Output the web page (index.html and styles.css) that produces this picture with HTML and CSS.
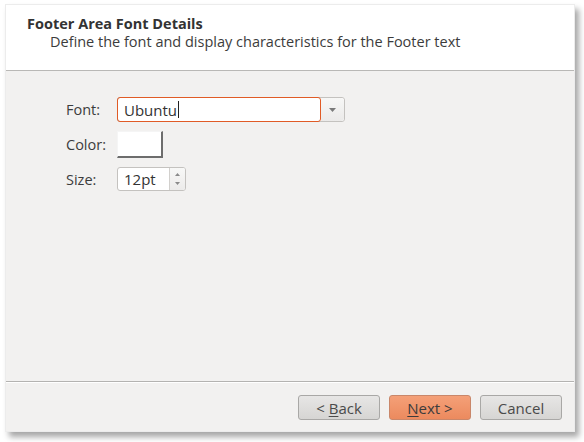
FILE: index.html
```html
<!DOCTYPE html>
<html>
<head>
<meta charset="utf-8">
<link rel="stylesheet" href="styles.css">
</head>
<body>
<div class="window">
  <div class="header">
    <div class="title">Footer Area Font Details</div>
    <div class="subtitle">Define the font and display characteristics for the Footer text</div>
  </div>
  <div class="content">
    <div class="form">
      <div class="label l-font">Font:</div>
      <div class="combo">
        <div class="combo-entry"><span>Ubuntu</span><span class="caret"></span></div>
        <div class="combo-btn">
          <svg width="9" height="6" viewBox="0 0 9 6"><path d="M1 1 L8 1 L4.5 5 Z" fill="#7a7a7a"/></svg>
        </div>
      </div>
      <div class="label l-color">Color:</div>
      <div class="colorbtn"></div>
      <div class="label l-size">Size:</div>
      <div class="spin">
        <div class="spin-entry">12pt</div>
        <div class="spin-btns">
          <svg width="7" height="18" viewBox="0 0 7 18"><path d="M3.5 3 L6 6 L1 6 Z" fill="#8a8a8a"/><path d="M1 12 L6 12 L3.5 15 Z" fill="#8a8a8a"/></svg>
        </div>
      </div>
    </div>
  </div>
  <div class="footer">
    <div class="btn"><span>&lt; <u>B</u>ack</span></div>
    <div class="btn primary"><span><u>N</u>ext &gt;</span></div>
    <div class="btn"><span>Cancel</span></div>
  </div>
</div>
</body>
</html>
```
FILE: styles.css
```css
html, body {
  margin: 0;
  padding: 0;
  background: #ffffff;
}
body {
  width: 584px;
  height: 442px;
  overflow: hidden;
  font-family: "Open Sans", "DejaVu Sans", sans-serif;
  font-size: 14.5px;
  color: #3c3c3c;
}
.window {
  margin: 4px 0 0 5px;
  width: 570px;
  height: 428px;
  background: #f2f1f0;
  box-shadow: 4px 5px 6px rgba(0,0,0,0.35);
  border: 1px solid #ececec;
  box-sizing: border-box;
  display: flex;
  flex-direction: column;
}
.header {
  background: #ffffff;
  height: 66px;
  box-sizing: border-box;
  border-bottom: 1px solid #b9b8b6;
  padding: 9px 0 0 21px;
}
.title {
  font-weight: bold;
  font-size: 14.5px;
  line-height: 19px;
  color: #333;
}
.subtitle {
  padding-left: 23px;
  line-height: 18px;
  color: #3c3c3c;
}
.content {
  flex: 1;
  padding: 26px 0 0 60px;
}
.form {
  display: grid;
  grid-template-columns: 51px auto;
  row-gap: 9px;
  align-items: center;
  justify-items: start;
}
.label {
  color: #3c3c3c;
}
.combo {
  display: flex;
  width: 228px;
  height: 25px;
  box-sizing: border-box;
  border: 1px solid #c4c2bf;
  border-radius: 3px;
  background: #ffffff;
}
.combo-entry {
  flex: 1;
  border: 1px solid #e05b26;
  border-radius: 3px;
  margin: -1px 0 -1px -1px;
  display: flex;
  align-items: center;
  padding-left: 6px;
  color: #333;
  font-size: 15px;
}
.caret {
  display: inline-block;
  width: 1px;
  height: 17px;
  background: #222;
  margin-left: 1px;
}
.combo-btn {
  width: 23px;
  display: flex;
  align-items: center;
  justify-content: center;
  background: linear-gradient(#f7f7f6, #ebeae9);
  border-radius: 0 3px 3px 0;
}
.colorbtn {
  width: 46px;
  height: 27px;
  box-sizing: border-box;
  background: #ffffff;
  border-right: 2px solid #6d6d6d;
  border-bottom: 2px solid #6d6d6d;
  border-top: 1px solid #f5f5f5;
  border-left: 1px solid #f5f5f5;
}
.spin {
  display: flex;
  width: 69px;
  height: 24px;
  box-sizing: border-box;
  border: 1px solid #c4c2bf;
  border-radius: 3px;
  background: #ffffff;
  overflow: hidden;
}
.spin-entry {
  flex: 1;
  display: flex;
  align-items: center;
  padding-left: 6px;
  font-size: 15px;
  color: #333;
}
.spin-btns {
  width: 15px;
  border-left: 1px solid #d2d0cd;
  display: flex;
  align-items: center;
  justify-content: center;
  background: linear-gradient(#f8f8f7, #ecebea);
}
.footer {
  height: 50px;
  box-sizing: border-box;
  border-top: 1px solid #b4b3b1;
  box-shadow: inset 0 1px 0 #ffffff;
  display: flex;
  justify-content: flex-end;
  align-items: flex-start;
  gap: 9px;
  padding: 13px 12px 0 0;
}
.btn {
  width: 82px;
  height: 25px;
  box-sizing: border-box;
  border: 1px solid #a9a8a6;
  border-radius: 3px;
  background: linear-gradient(#e7e6e5, #d6d5d3);
  display: flex;
  align-items: center;
  justify-content: center;
  color: #4a4a4a;
  font-size: 15px;
}
.btn u {
  text-decoration-thickness: 1px;
  text-underline-offset: 2px;
}
.btn.primary {
  background: linear-gradient(#f4a078, #ec8a5e);
  border-color: #c9876a;
  color: #3c3c3c;
}
```
